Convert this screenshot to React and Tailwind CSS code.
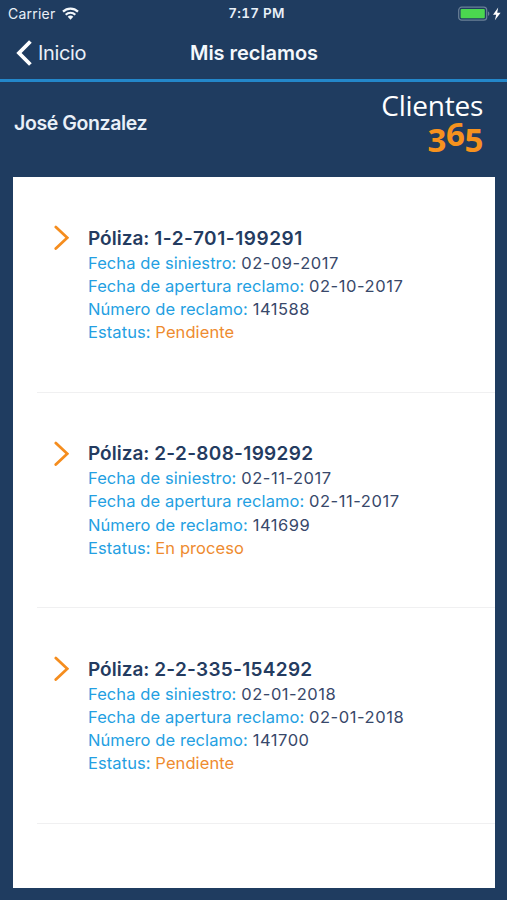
const claims = [
  { policy: '1-2-701-199291', incident: '02-09-2017', opened: '02-10-2017', number: '141588', status: 'Pendiente', tracking: 'tracking-[0.55px]' },
  { policy: '2-2-808-199292', incident: '02-11-2017', opened: '02-11-2017', number: '141699', status: 'En proceso', tracking: 'tracking-[0.32px]' },
  { policy: '2-2-335-154292', incident: '02-01-2018', opened: '02-01-2018', number: '141700', status: 'Pendiente', tracking: 'tracking-[0.3px]' },
];

function WifiIcon() {
  return (
    <svg width="17" height="13" viewBox="0 0 17 13" fill="none" stroke="#f4f8fc" strokeWidth="2.2">
      <path d="M1 4.6a10.8 10.8 0 0 1 15 0" />
      <path d="M3.7 7.7a6.9 6.9 0 0 1 9.6 0" />
      <path d="M5.7 9.8a3.9 3.9 0 0 1 5.6 0L8.5 12.7z" fill="#f4f8fc" stroke="none" />
    </svg>
  );
}

function BatteryIcon() {
  return (
    <svg width="44" height="16" viewBox="0 0 44 16" fill="none">
      <rect x="0.7" y="1.2" width="28" height="13" rx="3" stroke="#6b8097" strokeWidth="1.2" />
      <rect x="2.6" y="3.1" width="24.2" height="9.2" rx="1" fill="#4bd74f" />
      <path d="M30 5.6c1.8.6 1.8 3.8 0 4.4z" fill="#6b8097" />
      <path d="M40.2 1.6 35 8.8h3.2l-1.3 5.4 5.7-7.4h-3.4z" fill="#fff" />
    </svg>
  );
}

function StatusBar() {
  return (
    <div className="grid h-[27px] grid-cols-3 items-center pl-[8px] pr-[5px] text-[#e9f0f8]">
      <div className="flex items-center gap-[7px] text-[14px]">
        <span className="tracking-[0.22px]">Carrier</span>
        <WifiIcon />
      </div>
      <span className="pl-[3px] text-center text-[13.5px] font-semibold tracking-[0.25px] tabular-nums">7:17 PM</span>
      <div className="flex justify-end">
        <BatteryIcon />
      </div>
    </div>
  );
}

function NavBar() {
  return (
    <div className="grid h-[55px] grid-cols-[1fr_auto_1fr] items-center border-b-[3px] border-[#2387ca] pl-[16px] pr-[15px]">
      <button className="flex items-center gap-[6px] text-[20px] tracking-[-0.35px] text-[#e9f0f8]">
        <svg width="16" height="26" viewBox="0 0 16 26" fill="none" stroke="#fff" strokeWidth="3.8">
          <path d="M14.4 1.5 3 13l11.4 11.5" />
        </svg>
        Inicio
      </button>
      <h1 className="text-[20px] font-semibold tracking-[-0.05px] text-[#f4f8fc]">Mis reclamos</h1>
      <span />
    </div>
  );
}

function Logo() {
  return (
    <div className="flex flex-col items-end font-['Open_Sans','Noto_Sans',sans-serif]">
      <span className="text-[28px] leading-[30px] tracking-[-0.25px] text-white">Clientes</span>
      <span className="mt-[3px] flex text-[33px] leading-[34px] font-bold tracking-[-0.4px] text-[#f6921e]">
        <span>3</span>
        <span className="-translate-y-[6px]">6</span>
        <span>5</span>
      </span>
    </div>
  );
}

function Field({ label, value, accent }) {
  return (
    <p className="whitespace-nowrap tracking-[0.08px] text-[#249fe2]">
      {label}: <span className={accent ? 'text-[#ee8b30]' : 'tracking-[0.55px] text-[#38486a]'}>{value}</span>
    </p>
  );
}

function Claim({ claim }) {
  return (
    <li className="h-[215.5px] pl-[24px]">
      <div className="flex h-full gap-[19px] border-b border-[#f0f0f1] pl-[16px] pt-[48px]">
        <svg className="shrink-0" width="16" height="26" viewBox="0 0 16 26" fill="none" stroke="#f58d1e" strokeWidth="2.8" strokeLinecap="round">
          <path d="M2.8 2.1 14.3 12.8 2.8 23.6" />
        </svg>
        <div className="pt-[0.5px] text-[16.5px] leading-[23.3px]">
          <h2 className="mb-px whitespace-nowrap text-[19px] leading-[25px] font-semibold text-[#243b60]">
            Póliza: <span className={claim.tracking}>{claim.policy}</span>
          </h2>
          <Field label="Fecha de siniestro" value={claim.incident} />
          <Field label="Fecha de apertura reclamo" value={claim.opened} />
          <Field label="Número de reclamo" value={claim.number} />
          <Field label="Estatus" value={claim.status} accent />
        </div>
      </div>
    </li>
  );
}

export default function App() {
  return (
    <div className="flex h-[900px] w-[507px] flex-col overflow-hidden bg-[#1f3c60] font-['Inter','Liberation_Sans',sans-serif]">
      <StatusBar />
      <NavBar />
      <div className="flex h-[95px] items-start justify-between pl-[14px] pr-[24px] pt-[8px]">
        <p className="pt-[18px] text-[19.5px] leading-[30px] font-semibold tracking-[-0.4px] text-[#e9f0f8]">José Gonzalez</p>
        <Logo />
      </div>
      <ul className="ml-[13px] mr-[12px] h-[710.5px] bg-white">
        {claims.map((claim) => (
          <Claim key={claim.policy} claim={claim} />
        ))}
      </ul>
    </div>
  );
}
